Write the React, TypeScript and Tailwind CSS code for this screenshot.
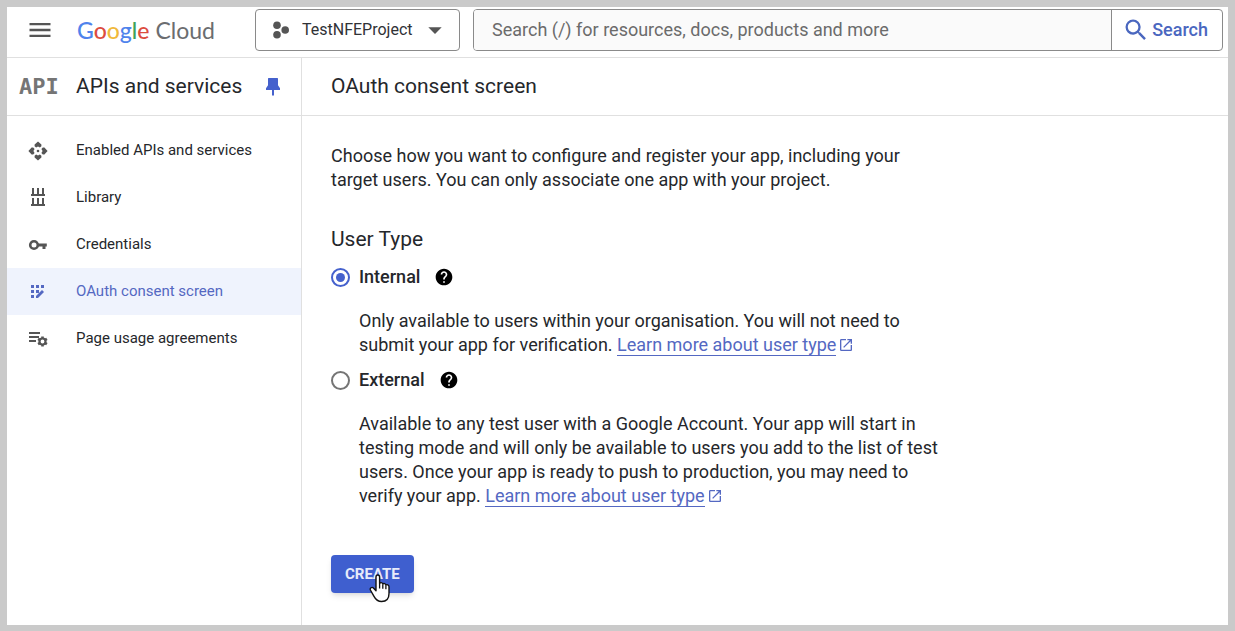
import React, { useState } from "react";
import { MdArrowDropDown, MdHelp, MdMenu, MdOpenInNew, MdSearch } from "react-icons/md";

type IconProps = { className?: string };

function ProjectIcon({ className }: IconProps) {
  return (
    <svg viewBox="0 0 18 18" className={className} fill="currentColor" aria-hidden>
      <circle cx="5" cy="4.2" r="3.8" />
      <circle cx="5" cy="13.8" r="3.8" />
      <circle cx="13.2" cy="9" r="3.8" />
    </svg>
  );
}

function PinIcon({ className }: IconProps) {
  return (
    <svg viewBox="0 0 14 20" className={className} fill="currentColor" aria-hidden>
      <path d="M3 1h8c.8 0 1 .4 1 1v6.2l2 3V13H8v5.5H6V13H0v-1.8l2-3V2c0-.6.2-1 1-1z" />
    </svg>
  );
}

function ApiIcon({ className }: IconProps) {
  const turns = [0, 90, 180, 270];
  return (
    <svg viewBox="0 0 20 20" className={className} fill="currentColor" aria-hidden>
      {turns.map((a) => (
        <path
          key={a}
          d="M10 .4l3.4 3.2v1.6L11.9 6.6 10 5.4 8.100 6.6 6.600 5.200V3.600z"
          transform={`rotate(${a} 10 10)`}
        />
      ))}
      <circle cx="10" cy="10" r="1.3" />
    </svg>
  );
}

function LibraryIcon({ className }: IconProps) {
  return (
    <svg viewBox="0 0 20 20" className={className} fill="currentColor" aria-hidden>
      <path d="M4 0h2v6H4zM9 0h2v6H9zM14 0h2v6h-2zM3 6h14v2H3z" />
      <path d="M4 10h2v6H4zM9 10h2v6H9zM14 10h2v6h-2zM3 16h14v2H3z" />
    </svg>
  );
}

function KeyIcon({ className }: IconProps) {
  return (
    <svg viewBox="0 0 20 20" className={className} aria-hidden>
      <circle cx="6" cy="10" r="3.8" fill="none" stroke="currentColor" strokeWidth="2.6" />
      <path d="M10 8.6h8.8v2.8h-1.3v2.6h-3v-2.600H10z" fill="currentColor" />
    </svg>
  );
}

function ConsentIcon({ className }: IconProps) {
  return (
    <svg viewBox="0 0 20 20" className={className} fill="currentColor" aria-hidden>
      <path d="M3 3h3v3H3zM8 3h3v3H8zM13 3h3v3h-3z" />
      <path d="M3 8h3v3H3zM8 8h3v3H8zM3 13h3v3H3z" />
      <path d="M8 14l6-6 2 2-6 6H8z" />
    </svg>
  );
}

function AgreementsIcon({ className }: IconProps) {
  const teeth = [0, 60, 120, 180, 240, 300];
  return (
    <svg viewBox="0 0 20 20" className={className} aria-hidden>
      <path d="M1 3h11v2H1zM1 7h10v2H1zM1 11h7v2H1z" fill="currentColor" />
      <circle cx="14.5" cy="12.5" r="3" fill="none" stroke="currentColor" strokeWidth="2.2" />
      {teeth.map((a) => (
        <path
          key={a}
          d="M13.2 7.4h2.6v2h-2.6z"
          fill="currentColor"
          transform={`rotate(${a} 14.5 12.5)`}
        />
      ))}
    </svg>
  );
}

function HandCursor({ className }: IconProps) {
  return (
    <svg viewBox="0 0 22 29" className={className} aria-hidden>
      <path
        d="M7 3c0-2.6 3.6-2.6 3.6 0v6.6c.4-1.5 3-1.3 3.2.5.8-1 2.900-.6 3.100.9.9-.8 3.100-.3 3.100 1.700v6.800c0 5-2.800 8-7.400 8-4 0-5.800-1.800-7.600-5.200L1.400 16c-.8-2 1.600-3.400 3-2L7 16.800z"
        fill="#fff"
        stroke="#111"
        strokeWidth="1.4"
        strokeLinejoin="round"
      />
      <path d="M10.6 9.6v5M13.8 10.4v4.4M16.9 11.2v4" stroke="#111" strokeWidth="1.3" />
    </svg>
  );
}

const navItems = [
  { label: "Enabled APIs and services", icon: ApiIcon },
  { label: "Library", icon: LibraryIcon },
  { label: "Credentials", icon: KeyIcon },
  { label: "OAuth consent screen", icon: ConsentIcon },
  { label: "Page usage agreements", icon: AgreementsIcon },
];

const userTypes = [
  {
    id: "internal",
    label: "Internal",
    text: "Only available to users within your organisation. You will not need to submit your app for verification.",
  },
  {
    id: "external",
    label: "External",
    text: "Available to any test user with a Google Account. Your app will start in testing mode and will only be available to users you add to the list of test users. Once your app is ready to push to production, you may need to verify your app.",
  },
];

function Logo() {
  return (
    <a href="#" className="flex w-[178px] gap-1.5 font-['Lato',sans-serif] text-[23px] leading-8">
      <span className="font-medium">
        <span className="text-[#4f83ec]">G</span>
        <span className="text-[#dc4c40]">o</span>
        <span className="text-[#f0b93a]">o</span>
        <span className="text-[#4f83ec]">g</span>
        <span className="text-[#3fa35a]">l</span>
        <span className="text-[#dc4c40]">e</span>
      </span>
      <span className="text-[#6b6d70]">Cloud</span>
    </a>
  );
}

function Header() {
  return (
    <header className="flex items-center border-b border-[#e0e0e0] pt-0.5 pr-[5px] pb-1.5 pl-[19px]">
      <button aria-label="Main menu" className="mr-[23px] text-[#555]">
        <MdMenu className="size-7" />
      </button>
      <Logo />
      <label className="mr-[13px] flex h-[42px] w-[205px] shrink-0 items-center rounded border border-[#8a8a8a] pr-2 pl-4 text-[#555]">
        <ProjectIcon className="size-[18px] shrink-0" />
        <select
          aria-label="Project"
          className="ml-3 min-w-0 flex-1 appearance-none bg-transparent text-base text-[#303236] outline-none"
        >
          <option>TestNFEProject</option>
        </select>
        <MdArrowDropDown className="size-8 shrink-0" />
      </label>
      <form className="flex h-[42px] min-w-0 flex-1 overflow-hidden rounded border border-[#8a8a8a]">
        <input
          type="text"
          aria-label="Search"
          placeholder="Search (/) for resources, docs, products and more"
          className="min-w-0 flex-1 bg-[#fafafa] px-[18px] text-lg outline-none placeholder:text-[#6b6b6b]"
        />
        <button
          type="button"
          className="flex items-center gap-0.5 border-l border-[#8a8a8a] pr-3.5 pl-2.5 text-lg font-medium text-[#4a67bf]"
        >
          <MdSearch className="size-7" />
          Search
        </button>
      </form>
    </header>
  );
}

function Sidebar() {
  return (
    <aside className="w-[295px] shrink-0 border-r border-[#e0e0e0]">
      <div className="flex h-[58px] items-center border-b border-[#e0e0e0] pl-3">
        <span className="w-[57px] font-['DejaVu_Sans_Mono',monospace] text-[22px] font-bold text-[#757575]">
          API
        </span>
        <h2 className="text-[21px]">APIs and services</h2>
        <button aria-label="Unpin menu" className="ml-6 text-[#4561cd]">
          <PinIcon className="h-5 w-3.5" />
        </button>
      </div>
      <nav className="pt-[11px]">
        {navItems.map(({ label, icon: Icon }) => {
          const active = label === "OAuth consent screen";
          return (
            <a
              key={label}
              href="#"
              aria-current={active ? "page" : undefined}
              className={`flex h-[47px] items-center gap-7 pl-[21px] text-[15px] ${
                active ? "bg-[#eff3fd] text-[#5468c2]" : ""
              }`}
            >
              <Icon className={`size-5 ${active ? "" : "text-[#555]"}`} />
              {label}
            </a>
          );
        })}
      </nav>
    </aside>
  );
}

export default function App() {
  const [userType, setUserType] = useState("internal");

  return (
    <div className="flex min-h-screen flex-col border-7 border-b-6 border-[#cacaca] bg-white font-['Roboto',sans-serif] text-[#25272b]">
      <Header />
      <div className="flex flex-1">
        <Sidebar />
        <main className="min-w-0 flex-1">
          <div className="flex h-[58px] items-center border-b border-[#e0e0e0] pl-[29px]">
            <h1 className="text-[21px]">OAuth consent screen</h1>
          </div>

          <form className="px-[29px] pt-7 text-lg leading-6">
            <p className="max-w-[590px]">
              Choose how you want to configure and register your app, including
              your target users. You can only associate one app with your
              project.
            </p>

            <h2 className="mt-[33px] mb-3 text-[21px] leading-7">User Type</h2>
            <div className="flex flex-col gap-[11px]">
              {userTypes.map((t) => (
                <div key={t.id}>
                  <div className="flex h-6 items-center">
                    <input
                      type="radio"
                      name="user-type"
                      id={t.id}
                      checked={userType === t.id}
                      onChange={() => setUserType(t.id)}
                      className="grid size-[19px] appearance-none place-content-center rounded-full border-2 border-[#757575] before:size-[9px] before:rounded-full checked:border-[#4561cd] checked:before:bg-[#4561cd]"
                    />
                    <label htmlFor={t.id} className="pl-[9px] font-medium">
                      {t.label}
                    </label>
                    <button type="button" aria-label={`About ${t.label}`} className="ml-3.5 text-black">
                      <MdHelp className="size-5" />
                    </button>
                  </div>
                  <p className="mt-5 ml-7 max-w-[582px]">
                    {t.text}{" "}
                    <a href="#" className="border-b border-[#5468c2] text-[#5468c2]">
                      Learn more about user type
                    </a>
                    <MdOpenInNew className="ml-0.5 inline size-4 align-[-2px] text-[#5468c2]" />
                  </p>
                </div>
              ))}
            </div>

            <button
              type="button"
              className="relative mt-[47px] h-[38px] rounded bg-[#3f5fcf] px-3.5 text-[15px] font-bold text-[#e8ecfa] shadow-md"
            >
              CREATE
              <HandCursor className="absolute top-[19px] left-[38px] h-[29px] w-[22px]" />
            </button>
          </form>
        </main>
      </div>
    </div>
  );
}
